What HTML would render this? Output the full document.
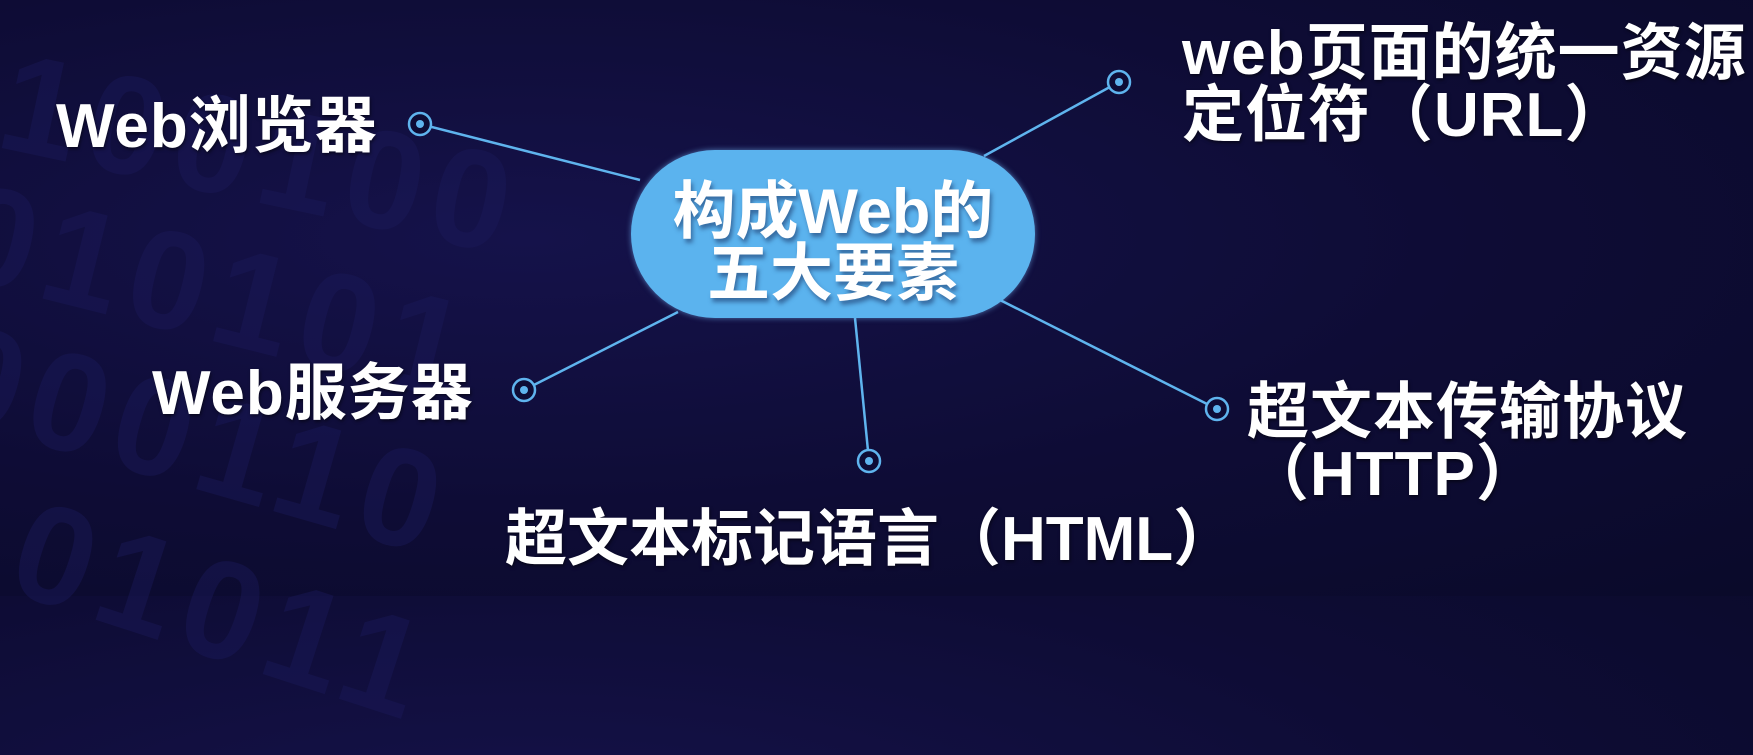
<!DOCTYPE html>
<html><head><meta charset="utf-8"><style>
html,body{margin:0;padding:0}
body{width:1753px;height:596px;overflow:hidden;background:radial-gradient(ellipse at 30% 40%,#15124a 0%,#0e0c35 55%,#0a0a2a 100%);position:relative;font-family:"Liberation Sans","Noto Sans CJK SC",sans-serif;}
.bin{position:absolute;font-family:"Liberation Sans",sans-serif;font-weight:bold;color:#1b1a5a;opacity:.45;white-space:nowrap;transform-origin:left top;letter-spacing:10px}
.t{position:absolute;color:#fff;font-weight:bold;font-size:62px;line-height:62px;letter-spacing:1px;white-space:nowrap;text-shadow:1px 2px 3px rgba(0,0,0,.5)}
.pill{position:absolute;left:631px;top:150px;width:404px;height:168px;border-radius:84px;background:#5bb3ee;box-shadow:0 0 6px rgba(120,190,255,.6)}
.pt{position:absolute;left:631px;top:181px;width:404px;text-align:center;color:#fff;font-weight:bold;font-size:63px;line-height:62px;text-shadow:2px 4px 4px rgba(30,60,110,.6)}
</style></head><body>
<div class="bin" style="left:20px;top:20px;font-size:140px;transform:rotate(12deg)">100100</div>
<div class="bin" style="left:-20px;top:150px;font-size:140px;transform:rotate(14deg)">010101</div>
<div class="bin" style="left:-30px;top:290px;font-size:140px;transform:rotate(16deg)">000110</div>
<div class="bin" style="left:-40px;top:440px;font-size:140px;transform:rotate(18deg)">101011</div>
<svg width="1753" height="596" style="position:absolute;left:0;top:0">
<g stroke="#5fb4ee" stroke-width="2.5" fill="none">
<line x1="420" y1="124" x2="640" y2="180"/>
<line x1="1119" y1="82" x2="984" y2="156"/>
<line x1="524" y1="390" x2="678" y2="312"/>
<line x1="869" y1="461" x2="855" y2="318"/>
<line x1="1217" y1="409" x2="1000" y2="300"/>
</g>
<g fill="#0e0c35" stroke="#5fb4ee" stroke-width="2.5">
<circle cx="420" cy="124" r="11"/><circle cx="1119" cy="82" r="11"/><circle cx="524" cy="390" r="11"/><circle cx="869" cy="461" r="11"/><circle cx="1217" cy="409" r="11"/>
</g>
<g fill="#5fb4ee"><circle cx="420" cy="124" r="4"/><circle cx="1119" cy="82" r="4"/><circle cx="524" cy="390" r="4"/><circle cx="869" cy="461" r="4"/><circle cx="1217" cy="409" r="4"/></g>
</svg>
<div class="pill"></div>
<div class="pt">构成Web的<br>五大要素</div>
<div class="t" style="left:56px;top:96px">Web浏览器</div>
<div class="t" style="left:1182px;top:23px">web页面的统一资源<br>定位符（URL）</div>
<div class="t" style="left:152px;top:363px">Web服务器</div>
<div class="t" style="left:1247px;top:382px">超文本传输协议<br>（HTTP）</div>
<div class="t" style="left:505px;top:509px;letter-spacing:0">超文本标记语言（HTML）</div>
</body></html>
